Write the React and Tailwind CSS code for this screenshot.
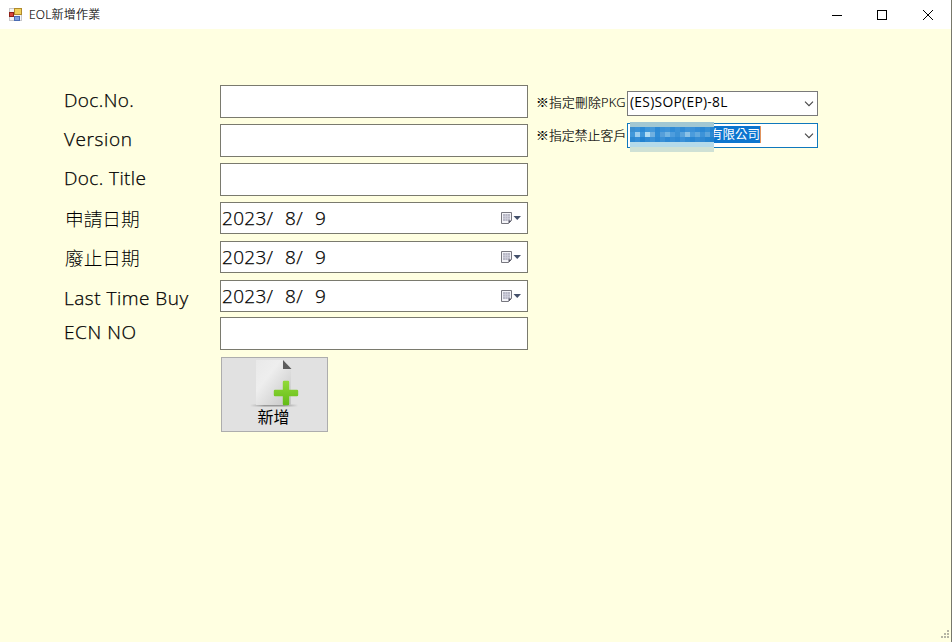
const labelFont = "font-['Open_Sans','Noto_Sans_CJK_TC',sans-serif]";

function FieldRow({ label, labelClass, rowClass, children }) {
  return (
    <div className={"flex items-start " + rowClass}>
      <div className={"w-[156px] shrink-0 whitespace-nowrap text-black " + labelClass}>{label}</div>
      {children}
    </div>
  );
}

function TextBox() {
  return <div className="h-[33px] w-[308px] border border-[#7a7a6e] bg-white" />;
}

function DateBox() {
  return (
    <div className="flex h-8 w-[308px] items-center border border-[#7a7a6e] bg-white pr-[5px] pl-px">
      <span className="flex-1 text-[19px] leading-[30px] font-light tracking-[0.3px] whitespace-pre text-black [-webkit-text-stroke:0.25px_black]">
        <span className="inline-block w-[63px]">2023/</span>
        <span className="inline-block w-[30px]">8/</span>
        <span>9</span>
      </span>
      <svg width="22" height="14" viewBox="0 0 22 14">
        <path d="M1.5 1.5h10v8l-3 3h-7z" fill="#f4f4f8" stroke="#77777f" />
        <path d="M3 3h7v7H3z" fill="#b9b9c6" />
        <path d="M5.500 3v7M7.500 3v7M3 5.500h7M3 7.500h7" stroke="#d4d4e0" strokeWidth=".6" />
        <path d="M8.5 12.5v-3h3z" fill="#505060" />
        <path d="M13.500 5h7.500l-3.750 4z" fill="#44506a" />
      </svg>
    </div>
  );
}

function Chevron() {
  return (
    <svg width="10" height="6" viewBox="0 0 10 6" fill="none" stroke="#444" strokeWidth="1.1">
      <path d="M1 .7l4 4 4-4" />
    </svg>
  );
}

const mosaic = [
  ["#a2c8d3"],
  "#3b8fd0 #3b93d8 #2b8ad6 #3c96da #4498da #2d8ad5 #3991d8 #3e94d8 #308cd6 #3c93d8 #328cd5 #3e94d8 #3b91d8 #328cd6 #2b88d4 #3590d6 #2484d2".split(" "),
  "#4298da #9ccdee #3f97da #b0dbf2 #70b0e0 #2f8cd6 #559fda #72b4e2 #4e9ddd #3c92d6 #5aa4dc #8cc2e6 #4b9cdc #62a9de #3d93d8 #5ba4dc #2c88d2".split(" "),
  "#2d88d0 #348dd6 #2282d0 #2f8ad4 #3a91d7 #2c88d4 #3a90d6 #2d88d4 #358dd5 #2f89d4 #3b91d8 #308bd4 #2986d2 #348cd4 #2f88d2 #2584d0 #1e80ce".split(" "),
  ["#b4daea"],
  ["#cfe1d5"],
];

export default function App() {
  return (
    <div className={"flex h-[642px] w-[952px] flex-col overflow-hidden border-r border-[#77776c] bg-[#ffffe1] text-black " + labelFont}>
      <header className="flex h-[29px] shrink-0 items-center bg-white pr-[17px] pl-2">
        <svg width="15" height="15" viewBox="0 0 15 15">
          <rect x="1.500" y="1.500" width="12" height="12" fill="#f5f5f5" stroke="#c8c8cc" />
          <rect x="1.500" y="5.500" width="4" height="4" fill="#d9453a" stroke="#8d2018" />
          <rect x="6.500" y="1.500" width="7" height="6" fill="#f0d05a" stroke="#b08a2c" />
          <rect x="6.500" y="9.500" width="5" height="4" fill="#7fa0e0" stroke="#4a6cb4" />
        </svg>
        <span className="ml-1.5 flex-1 text-[12px] leading-4 font-light tracking-[0.2px] [-webkit-text-stroke:0.15px_black]">EOL新增作業</span>
        <svg width="102" height="12" viewBox="0 0 102 12" fill="none" stroke="#000">
          <path d="M0 6.500h10M91 1l10 10M101 1L91 11" />
          <rect x="45.500" y="1.500" width="9" height="9" />
        </svg>
      </header>
      <main className="flex flex-1 items-start pt-14 pl-16">
        <div className="w-[464px] shrink-0 text-[19px] leading-[26px] font-light tracking-[0.4px] [-webkit-text-stroke:0.25px_black]">
          <FieldRow label="Doc.No." labelClass="pt-0.5" rowClass="h-[39px]"><TextBox /></FieldRow>
          <FieldRow label="Version" labelClass="pt-0.5 tracking-[0.6px]" rowClass="h-[39px]"><TextBox /></FieldRow>
          <FieldRow label="Doc. Title" labelClass="pt-0.5" rowClass="h-[39px]"><TextBox /></FieldRow>
          <FieldRow label="申請日期" labelClass="pt-1 pl-px text-[18.7px] tracking-normal [-webkit-text-stroke:0px]" rowClass="h-[39px]"><DateBox /></FieldRow>
          <FieldRow label="廢止日期" labelClass="pt-1 pl-px text-[18.7px] tracking-normal [-webkit-text-stroke:0px]" rowClass="h-[39px]"><DateBox /></FieldRow>
          <FieldRow label="Last Time Buy" labelClass="pt-[5px] tracking-[0.5px]" rowClass="h-[37px]"><DateBox /></FieldRow>
          <FieldRow label="ECN NO" labelClass="pt-0.5 tracking-[0.6px]" rowClass="h-10"><TextBox /></FieldRow>
          <button className="ml-[157px] flex h-[75px] w-[107px] flex-col items-center border border-[#adadad] bg-[#e1e1e1] pt-0.5 font-normal tracking-normal [-webkit-text-stroke:0px]">
            <svg width="50" height="48" viewBox="0 0 50 48">
              <defs>
                <linearGradient id="paper" x1="0" y1="0" x2="1" y2="1">
                  <stop offset="0" stopColor="#e9e9e9" />
                  <stop offset=".35" stopColor="#eeeeee" />
                  <stop offset="1" stopColor="#c4c4c4" />
                </linearGradient>
                <linearGradient id="plus" x1="0" y1="0" x2="0" y2="1">
                  <stop offset="0" stopColor="#90d838" />
                  <stop offset="1" stopColor="#65bd18" />
                </linearGradient>
                <linearGradient id="shade" x1="0" y1="0" x2="1" y2="0">
                  <stop offset="0" stopColor="#999" stopOpacity="0" />
                  <stop offset=".3" stopColor="#999" />
                  <stop offset=".7" stopColor="#999" />
                  <stop offset="1" stopColor="#999" stopOpacity="0" />
                </linearGradient>
              </defs>
              <rect x="0" y="44.500" width="48" height="2" fill="url(#shade)" />
              <path d="M6 0h27l8 8v37H6z" fill="url(#paper)" />
              <path d="M33 0l8.500 9H33z" fill="#5c5c5c" />
              <path d="M34 22h4v9h9v4h-9v9h-4v-9h-9v-4h9z" fill="url(#plus)" stroke="url(#plus)" strokeWidth="2.400" strokeLinejoin="round" />
            </svg>
            <span className="mr-0.5 text-[16px] leading-[18px]">新增</span>
          </button>
        </div>
        <div className="ml-2 flex flex-col gap-[7px] pt-[6px]">
          <div className="flex h-[25px] items-center">
            <span className="w-[91px] pb-0.5 text-[12.8px] font-light tracking-[0.2px] whitespace-nowrap [-webkit-text-stroke:0.15px_black]">※指定刪除PKG</span>
            <div className="flex h-[25px] w-[191px] items-center justify-between border border-[#7a7a7a] bg-white pr-[3px] pl-0.5">
              <span className="pb-0.5 text-[13.8px] tracking-[0.3px]">(ES)SOP(EP)-8L</span>
              <Chevron />
            </div>
          </div>
          <div className="flex h-[25px] items-center">
            <span className="w-[91px] text-[12.8px] font-light tracking-[0.1px] whitespace-nowrap [-webkit-text-stroke:0.15px_black]">※指定禁止客戶</span>
            <div className="relative flex h-[25px] w-[191px] items-center justify-between border border-[#0f78bd] bg-white pr-[3px] pl-0.5">
              <span className="mb-0.5 h-[17px] w-[131px] border-r border-[#e0935d] bg-[#0c75cf] text-right text-[12.5px] leading-[17px] text-white">有限公司</span>
              <Chevron />
              <div className="absolute -top-0.5 left-0.5 flex h-[30px] w-[84px] flex-col overflow-hidden">
                {mosaic.map((row, r) => (
                  <div key={r} className="flex h-[5px]">
                    {row.map((c, i) => (
                      <span key={i} className={row.length > 1 ? "w-[5px] shrink-0" : "flex-1"} style={{ backgroundColor: c }} />
                    ))}
                  </div>
                ))}
              </div>
            </div>
          </div>
        </div>
      </main>
      <footer className="flex h-3 shrink-0 justify-end pr-px">
        <svg width="9" height="9" viewBox="0 0 9 9" fill="#b5b5a5">
          <path d="M6 0h2v2H6zM3 3h2v2H3zM6 3h2v2H6zM0 6h2v2H0zM3 6h2v2H3zM6 6h2v2H6z" />
        </svg>
      </footer>
    </div>
  );
}
